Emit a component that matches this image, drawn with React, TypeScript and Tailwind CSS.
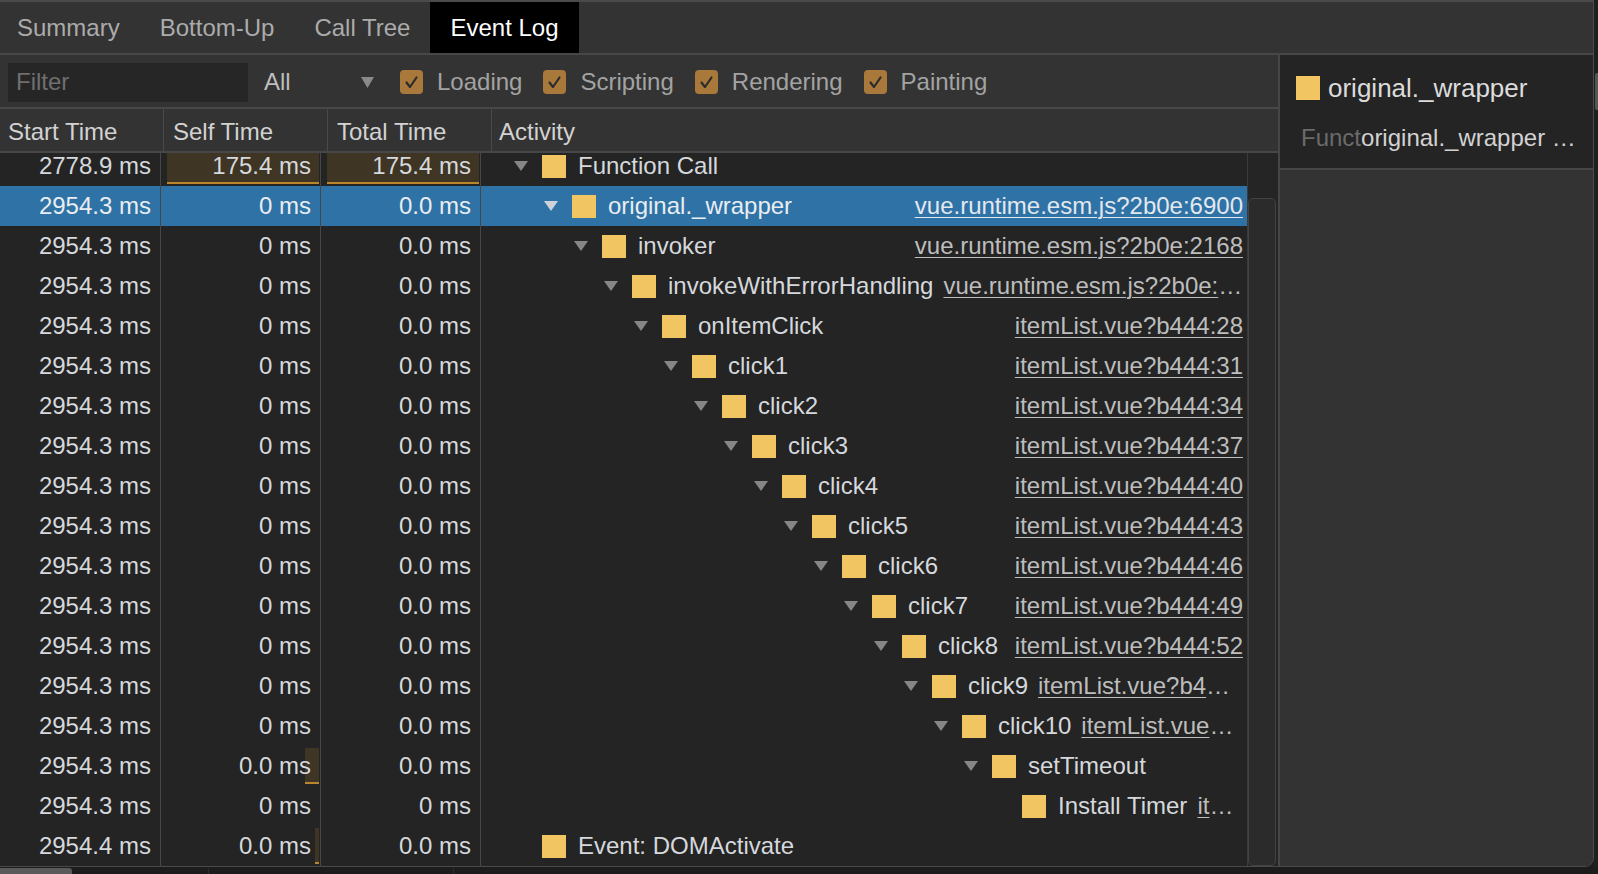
import React from "react";

type Row = {
  start: string;
  self: string;
  total: string;
  level: number;
  name: string;
  link?: string;
  tri: boolean;
  selfBar?: number;
  totalBar?: number;
  selected?: boolean;
};

const rows: Row[] = [
  { start: "2778.9 ms", self: "175.4 ms", total: "175.4 ms", level: 0, name: "Function Call", tri: true, selfBar: 152, totalBar: 152 },
  { start: "2954.3 ms", self: "0 ms", total: "0.0 ms", level: 1, name: "original._wrapper", link: "vue.runtime.esm.js?2b0e:6900", tri: true, selected: true },
  { start: "2954.3 ms", self: "0 ms", total: "0.0 ms", level: 2, name: "invoker", link: "vue.runtime.esm.js?2b0e:2168", tri: true },
  { start: "2954.3 ms", self: "0 ms", total: "0.0 ms", level: 3, name: "invokeWithErrorHandling", link: "vue.runtime.esm.js?2b0e:1854", tri: true },
  { start: "2954.3 ms", self: "0 ms", total: "0.0 ms", level: 4, name: "onItemClick", link: "itemList.vue?b444:28", tri: true },
  { start: "2954.3 ms", self: "0 ms", total: "0.0 ms", level: 5, name: "click1", link: "itemList.vue?b444:31", tri: true },
  { start: "2954.3 ms", self: "0 ms", total: "0.0 ms", level: 6, name: "click2", link: "itemList.vue?b444:34", tri: true },
  { start: "2954.3 ms", self: "0 ms", total: "0.0 ms", level: 7, name: "click3", link: "itemList.vue?b444:37", tri: true },
  { start: "2954.3 ms", self: "0 ms", total: "0.0 ms", level: 8, name: "click4", link: "itemList.vue?b444:40", tri: true },
  { start: "2954.3 ms", self: "0 ms", total: "0.0 ms", level: 9, name: "click5", link: "itemList.vue?b444:43", tri: true },
  { start: "2954.3 ms", self: "0 ms", total: "0.0 ms", level: 10, name: "click6", link: "itemList.vue?b444:46", tri: true },
  { start: "2954.3 ms", self: "0 ms", total: "0.0 ms", level: 11, name: "click7", link: "itemList.vue?b444:49", tri: true },
  { start: "2954.3 ms", self: "0 ms", total: "0.0 ms", level: 12, name: "click8", link: "itemList.vue?b444:52", tri: true },
  { start: "2954.3 ms", self: "0 ms", total: "0.0 ms", level: 13, name: "click9", link: "itemList.vue?b444:55", tri: true },
  { start: "2954.3 ms", self: "0 ms", total: "0.0 ms", level: 14, name: "click10", link: "itemList.vue?b444:58", tri: true },
  { start: "2954.3 ms", self: "0.0 ms", total: "0.0 ms", level: 15, name: "setTimeout", tri: true, selfBar: 14 },
  { start: "2954.3 ms", self: "0 ms", total: "0 ms", level: 16, name: "Install Timer", link: "itemList.vue?b444:58", tri: false },
  { start: "2954.4 ms", self: "0.0 ms", total: "0.0 ms", level: 0, name: "Event: DOMActivate", tri: false, selfBar: 4 },
];

function Tri({ light }: { light?: boolean }) {
  return (
    <svg width="14" height="10" viewBox="0 0 14 10" className="shrink-0">
      <polygon points="0,0 14,0 7,10" fill={light ? "#cdd3d9" : "#868686"} />
    </svg>
  );
}

function Check() {
  return (
    <div className="w-[23px] h-[24px] rounded-[4px] bg-[#a8793b] flex items-center justify-center shrink-0">
      <svg width="15" height="15" viewBox="0 0 15 15">
        <polyline points="2.5,7.5 6,12 12.5,2.5" fill="none" stroke="#2c2c2c" strokeWidth="2.2" strokeLinecap="round" strokeLinejoin="round" />
      </svg>
    </div>
  );
}

function Bar({ w }: { w: number }) {
  return (
    <div
      className="absolute right-[1px] top-[2px] bottom-[2px] bg-[#3e3525] border-b-2 border-[#b9862c]"
      style={{ width: w }}
    />
  );
}

export default function App() {
  return (
    <div className="w-[1598px] h-[874px] bg-[#1c1c1c] relative overflow-hidden font-['Liberation_Sans',Arial,sans-serif] text-[24px] leading-none">
      <div className="w-[1594px] h-[867px] bg-[#333333] border-t-2 border-b border-r border-[#4a4a4a] rounded-br-[9px] overflow-hidden flex flex-col">
        {/* tabs */}
        <div className="h-[53px] shrink-0 flex items-stretch border-b-2 border-[#474747]">
          <div className="flex items-stretch ml-[-3px]">
            {["Summary", "Bottom-Up", "Call Tree"].map((t) => (
              <div key={t} className="px-[20px] flex items-center text-[#ababab]">
                {t}
              </div>
            ))}
            <div className="px-[20px] flex items-center bg-black text-white">Event Log</div>
          </div>
        </div>
        {/* content */}
        <div className="flex-1 flex min-h-0">
          {/* left */}
          <div className="w-[1278px] shrink-0 flex flex-col">
            {/* toolbar */}
            <div className="h-[54px] shrink-0 border-b-2 border-[#474747] flex items-center pl-[8px] pt-[2px]">
              <div className="w-[240px] h-[39px] bg-[#262626] flex items-center pl-[8px] text-[#6f6f6f]">
                Filter
              </div>
              <div className="ml-[16px] w-[110px] flex items-center justify-between text-[#bdbdbd]">
                <span>All</span>
                <svg width="13" height="11" viewBox="0 0 13 11">
                  <polygon points="0,0 13,0 6.5,11" fill="#8a8a8a" />
                </svg>
              </div>
              <div className="ml-[26px] flex items-center gap-[21px] text-[#a3a3a3]">
                {["Loading", "Scripting", "Rendering", "Painting"].map((c) => (
                  <div key={c} className="flex items-center gap-[14px]">
                    <Check />
                    <span>{c}</span>
                  </div>
                ))}
              </div>
            </div>
            {/* header */}
            <div className="h-[44px] shrink-0 border-b-2 border-[#474747] grid grid-cols-[164px_164px_164px_1fr] text-[#d2d2d2]">
              <div className="border-r border-[#4a4a4a] flex items-center pl-[8px] pt-[3px]">Start Time</div>
              <div className="border-r border-[#4a4a4a] flex items-center pl-[9px] pt-[3px]">Self Time</div>
              <div className="border-r border-[#4a4a4a] flex items-center pl-[9px] pt-[3px]">Total Time</div>
              <div className="flex items-center pl-[7px] pt-[3px]">Activity</div>
            </div>
            {/* body */}
            <div className="flex-1 flex min-h-0">
              <div className="w-[1247px] shrink-0 bg-[#242424] overflow-hidden">
                <div className="mt-[-7px]">
                  {rows.map((r, i) => {
                    const sel = !!r.selected;
                    const txt = sel ? "text-[#e9edf1]" : "text-[#d5d8dc]";
                    return (
                      <div
                        key={i}
                        className={`h-[40px] grid grid-cols-[161px_160px_160px_1fr] ${sel ? "bg-[#2e72a6]" : ""} ${txt}`}
                      >
                        <div className="border-r border-[#474747] flex items-center justify-end pr-[9px]">{r.start}</div>
                        <div className="relative border-r border-[#474747] flex items-center justify-end pr-[9px]">
                          {r.selfBar ? <Bar w={r.selfBar} /> : null}
                          <span className="relative">{r.self}</span>
                        </div>
                        <div className="relative border-r border-[#474747] flex items-center justify-end pr-[9px]">
                          {r.totalBar ? <Bar w={r.totalBar} /> : null}
                          <span className="relative">{r.total}</span>
                        </div>
                        <div
                          className="flex items-center pr-[4px] min-w-0"
                          style={{ paddingLeft: 33 + 30 * r.level }}
                        >
                          <div className="w-[14px] mr-[14px] shrink-0 flex items-center">
                            {r.tri ? <Tri light={sel} /> : null}
                          </div>
                          <div className="w-[24px] h-[23px] bg-[#f0c562] shrink-0 mr-[12px]" />
                          <span className="whitespace-nowrap shrink-0">{r.name}</span>
                          {r.link ? (
                            <div
                              className={`ml-[10px] flex-1 min-w-0 whitespace-nowrap overflow-hidden text-ellipsis text-right leading-[30px] ${
                                sel ? "text-[#e3e8ee]" : "text-[#bdbdbd]"
                              }`}
                            >
                              <span className="underline underline-offset-[3px] decoration-1">{r.link}</span>
                            </div>
                          ) : null}
                        </div>
                      </div>
                    );
                  })}
                </div>
              </div>
              {/* scrollbar */}
              <div className="w-[31px] shrink-0 bg-[#252525] border-l border-[#3b3b3b] relative">
                <div className="absolute left-0 right-[2px] top-[45px] bottom-0 rounded-[5px] bg-[#2b2b2b] border border-[#434343]" />
              </div>
            </div>
          </div>
          {/* sidebar */}
          <div className="flex-1 border-l-2 border-[#464646] flex flex-col">
            <div className="h-[115px] shrink-0 bg-[#242424] border-b-2 border-[#464646] pl-[16px] pt-[21px]">
              <div className="flex items-center h-[24px]">
                <div className="w-[24px] h-[24px] bg-[#f0c562] shrink-0" />
                <span className="ml-[8px] text-[26px] text-[#dcdcdc] whitespace-nowrap">original._wrapper</span>
              </div>
              <div className="mt-[26px] pl-[5px] whitespace-nowrap">
                <span className="text-[#6b6b6b]">Funct</span>
                <span className="text-[#d2d2d2]">original._wrapper …</span>
              </div>
            </div>
            <div className="flex-1 bg-[#333333]" />
          </div>
        </div>
      </div>
      {/* right edge */}
      <div className="absolute right-0 top-0 w-[4px] h-[867px] bg-[#1f1f1f]">
        <div className="absolute left-[1px] right-0 top-[73px] h-[37px] bg-[#555555] rounded-l-[2px]" />
      </div>
      {/* bottom strip */}
      <div className="absolute left-0 bottom-0 w-[72px] h-[6px] bg-[#5a5a5a] rounded-tr-[3px]" />
      <div className="absolute left-[208px] bottom-0 w-[1px] h-[6px] bg-[#2c2c2c]" />
      <div className="absolute left-[453px] bottom-0 w-[1px] h-[6px] bg-[#2c2c2c]" />
    </div>
  );
}
